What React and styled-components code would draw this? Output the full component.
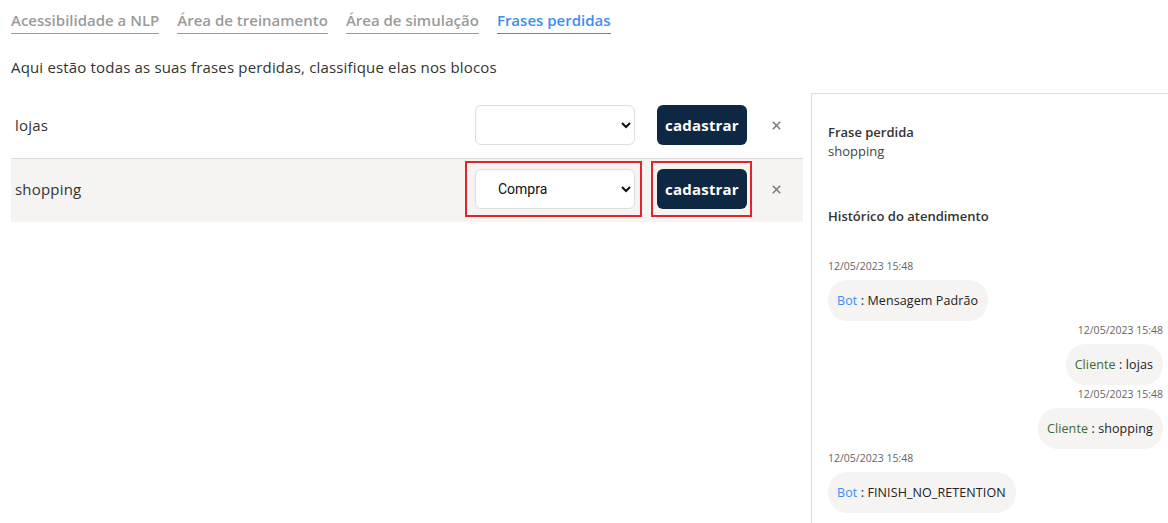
import React from "react";
import styled, { createGlobalStyle } from "styled-components";

const Global = createGlobalStyle`
  html, body { margin: 0; padding: 0; background: #fff; }
  body { font-family: "Open Sans", "Noto Sans", sans-serif; color: #333; }
  * { box-sizing: border-box; }
`;

const Page = styled.div`
  width: 1168px;
  height: 523px;
  overflow: hidden;
  padding-left: 11px;
`;

const Tabs = styled.nav`
  display: flex;
  gap: 18px;
  padding-top: 9px;
`;

const Tab = styled.div`
  font-size: 15px;
  font-weight: 600;
  line-height: 22px;
  padding-bottom: 2px;
  color: ${(p) => (p.$active ? "#3a8ef6" : "#9b9b9b")};
  border-bottom: 1px solid ${(p) => (p.$active ? "#3a8ef6" : "#9b9b9b")};
`;

const Subtitle = styled.p`
  margin: 22px 0 0;
  font-size: 15px;
  line-height: 22px;
  letter-spacing: 0.17px;
  color: #333;
`;

const Content = styled.div`
  display: flex;
  margin-top: 15px;
  align-items: flex-start;
`;

const Table = styled.div`
  width: 792px;
  margin-top: 2px;
  display: flex;
  flex-direction: column;
`;

const Row = styled.div`
  display: flex;
  align-items: stretch;
  height: ${(p) => (p.$last ? "63px" : "64px")};
  background: ${(p) => (p.$shaded ? "#f5f4f2" : "#fff")};
  border-bottom: ${(p) => (p.$last ? "none" : "1px solid #dcdcdc")};
`;

const Phrase = styled.div`
  flex: 1;
  display: flex;
  align-items: center;
  padding: 0 0 4px 4px;
  font-size: 15px;
  letter-spacing: 0.2px;
  color: #333;
`;

const SelectBox = styled.div`
  width: 177px;
  display: flex;
  align-items: center;
  padding: 0 5px 0 8px;
  margin: 2px 0 ${(p) => (p.$last ? "5px" : "6px")};
  border: 2px solid ${(p) => (p.$highlight ? "#e0252b" : "transparent")};
`;

const Select = styled.select`
  width: 160px;
  height: 40px;
  border: 1px solid #dedede;
  border-radius: 6px;
  background: #fff;
  padding: 0 10px 0 18px;
  font-family: "Roboto", "Liberation Sans", sans-serif;
  font-size: 14px;
  color: #111;
  outline: none;
`;

const ButtonBox = styled.div`
  width: 101px;
  margin: 2px 0 ${(p) => (p.$last ? "5px" : "6px")} 9px;
  display: flex;
  align-items: center;
  padding: 0 3px 0 4px;
  border: 2px solid ${(p) => (p.$highlight ? "#e0252b" : "transparent")};
`;

const Button = styled.button`
  width: 90px;
  height: 40px;
  border: none;
  border-radius: 6px;
  background: #0e2743;
  color: #fff;
  font-family: "Open Sans", sans-serif;
  font-weight: 700;
  font-size: 15px;
  letter-spacing: 0.2px;
  cursor: pointer;
  padding: 0;
`;

const CloseCell = styled.div`
  flex: 0 0 51px;
  display: flex;
  align-items: center;
  justify-content: center;
  padding: 0 2px 2px 0;
`;

const Panel = styled.aside`
  flex: 1;
  margin-left: 8px;
  height: 440px;
  border-left: 1px solid #dcdcdc;
  border-top: 1px solid #dcdcdc;
  padding: 29px 5px 0 16px;
  display: flex;
  flex-direction: column;
`;

const Label = styled.div`
  font-size: 13px;
  font-weight: 600;
  line-height: 19px;
  color: #333;
`;

const Value = styled.div`
  font-size: 13px;
  line-height: 19px;
  color: #444;
  margin-bottom: 46px;
`;

const History = styled.div`
  display: flex;
  flex-direction: column;
  gap: 1px;
  margin-top: 32px;
`;

const Message = styled.div`
  display: flex;
  flex-direction: column;
  align-items: ${(p) => (p.$right ? "flex-end" : "flex-start")};
`;

const Time = styled.div`
  font-size: 10.5px;
  line-height: 16px;
  color: #666;
  margin-bottom: 6px;
`;

const Bubble = styled.div`
  height: 41px;
  display: flex;
  align-items: center;
  padding: 0 10px 0 9px;
  border-radius: 20px;
  background: #f5f4f2;
  font-size: 12.5px;
  letter-spacing: 0.1px;
  color: #222;
  white-space: nowrap;
`;

const Author = styled.span`
  color: ${(p) => (p.$bot ? "#3a8ef6" : "#3f6b2c")};
`;

const CloseIcon = () => (
  <svg width="9" height="9" viewBox="0 0 9 9">
    <path d="M0.8 0.8 L8.2 8.2 M8.2 0.8 L0.8 8.2" stroke="#7a7a7a" strokeWidth="1.5" />
  </svg>
);

const rows = [
  { text: "lojas", value: "" },
  { text: "shopping", value: "compra", highlight: true },
];

const messages = [
  { bot: true, text: "Mensagem Padrão" },
  { bot: false, text: "lojas" },
  { bot: false, text: "shopping" },
  { bot: true, text: "FINISH_NO_RETENTION" },
];

export default function App() {
  return (
    <Page>
      <Global />
      <Tabs>
        <Tab>Acessibilidade a NLP</Tab>
        <Tab>Área de treinamento</Tab>
        <Tab>Área de simulação</Tab>
        <Tab $active>Frases perdidas</Tab>
      </Tabs>
      <Subtitle>Aqui estão todas as suas frases perdidas, classifique elas nos blocos</Subtitle>
      <Content>
        <Table>
          {rows.map((r, i) => {
            const last = i === rows.length - 1;
            return (
              <Row key={r.text} $shaded={i % 2 === 1} $last={last}>
                <Phrase>{r.text}</Phrase>
                <SelectBox $highlight={r.highlight} $last={last}>
                  <Select defaultValue={r.value}>
                    <option value=""></option>
                    <option value="compra">Compra</option>
                  </Select>
                </SelectBox>
                <ButtonBox $highlight={r.highlight} $last={last}>
                  <Button>cadastrar</Button>
                </ButtonBox>
                <CloseCell>
                  <CloseIcon />
                </CloseCell>
              </Row>
            );
          })}
        </Table>
        <Panel>
          <Label>Frase perdida</Label>
          <Value>shopping</Value>
          <Label>Histórico do atendimento</Label>
          <History>
            {messages.map((m, i) => (
              <Message key={i} $right={!m.bot}>
                <Time>12/05/2023 15:48</Time>
                <Bubble>
                  <Author $bot={m.bot}>{m.bot ? "Bot" : "Cliente"}</Author>&nbsp;: {m.text}
                </Bubble>
              </Message>
            ))}
          </History>
        </Panel>
      </Content>
    </Page>
  );
}
